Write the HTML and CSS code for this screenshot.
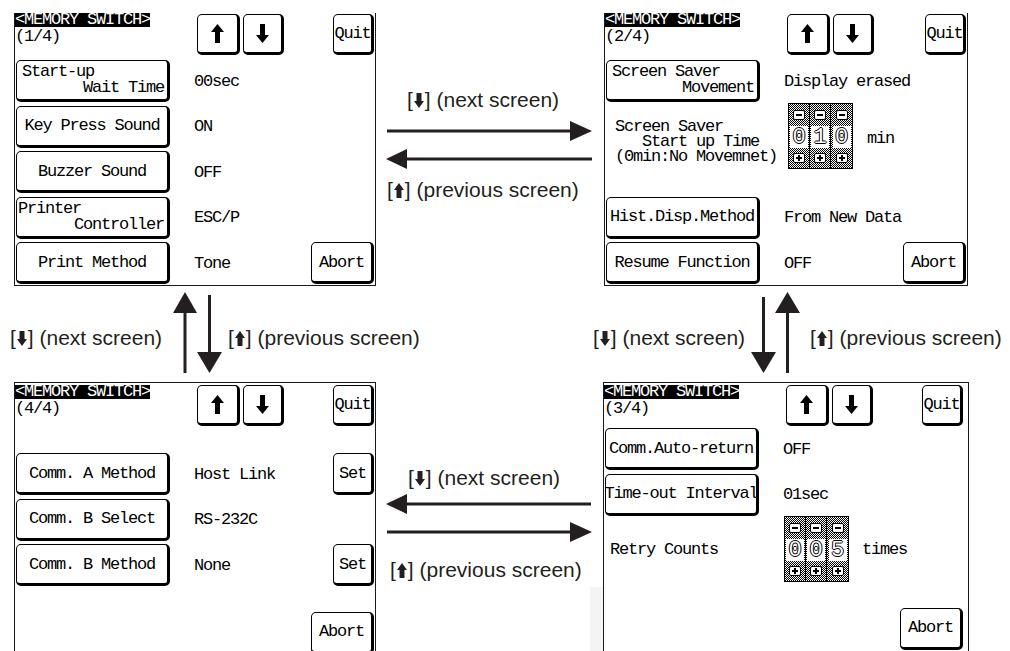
FILE: index.html
```html
<!DOCTYPE html>
<html lang="en">
<head>
    <meta charset="UTF-8">
    <meta name="viewport" content="width=device-width, initial-scale=1.0">
    <title>MEMORY SWITCH screens</title>
    <link rel="stylesheet" href="styles.css">
</head>
<body>
<div class="canvas">

    <!-- connectors between the screens -->
    <svg class="arrows" width="1010" height="651" viewBox="0 0 1010 651">
        <rect x="590" y="587" width="13" height="64" fill="#f4f4f4"/>
        <g stroke="#231f20" stroke-width="3">
            <line x1="387" y1="131" x2="572" y2="131"/>
            <line x1="405" y1="159" x2="592" y2="159"/>
            <line x1="405" y1="504" x2="591" y2="504"/>
            <line x1="387" y1="532" x2="572" y2="532"/>
            <line x1="185" y1="311" x2="185" y2="373"/>
            <line x1="209.5" y1="295" x2="209.5" y2="354"/>
            <line x1="763.5" y1="297" x2="763.5" y2="354"/>
            <line x1="787.5" y1="311" x2="787.5" y2="373"/>
        </g>
        <g fill="#231f20">
            <polygon points="570,121 592,131 570,141"/>
            <polygon points="407,149 386,159 407,169"/>
            <polygon points="407,494 386,504 407,514"/>
            <polygon points="570,522 592,532 570,542"/>
            <polygon points="173,313 185,292 197,313"/>
            <polygon points="197,352 209.5,373 222,352"/>
            <polygon points="751,352 763.5,373 776,352"/>
            <polygon points="775,313 787.5,292 800,313"/>
        </g>
    </svg>

    <div class="lbl l-top-next">[<svg class="ico" width="10" height="15" viewBox="0 0 10 15"><path d="M5 15 L10 8 H7.5 V0 H2.5 V8 H0 Z"/></svg>] (next screen)</div>
    <div class="lbl l-top-prev">[<svg class="ico" width="10" height="15" viewBox="0 0 10 15"><path d="M5 0 L10 7 H7.5 V15 H2.5 V7 H0 Z"/></svg>] (previous screen)</div>
    <div class="lbl l-left-next">[<svg class="ico" width="10" height="15" viewBox="0 0 10 15"><path d="M5 15 L10 8 H7.5 V0 H2.5 V8 H0 Z"/></svg>] (next screen)</div>
    <div class="lbl l-left-prev">[<svg class="ico" width="10" height="15" viewBox="0 0 10 15"><path d="M5 0 L10 7 H7.5 V15 H2.5 V7 H0 Z"/></svg>] (previous screen)</div>
    <div class="lbl l-right-next">[<svg class="ico" width="10" height="15" viewBox="0 0 10 15"><path d="M5 15 L10 8 H7.5 V0 H2.5 V8 H0 Z"/></svg>] (next screen)</div>
    <div class="lbl l-right-prev">[<svg class="ico" width="10" height="15" viewBox="0 0 10 15"><path d="M5 0 L10 7 H7.5 V15 H2.5 V7 H0 Z"/></svg>] (previous screen)</div>
    <div class="lbl l-bot-next">[<svg class="ico" width="10" height="15" viewBox="0 0 10 15"><path d="M5 15 L10 8 H7.5 V0 H2.5 V8 H0 Z"/></svg>] (next screen)</div>
    <div class="lbl l-bot-prev">[<svg class="ico" width="10" height="15" viewBox="0 0 10 15"><path d="M5 0 L10 7 H7.5 V15 H2.5 V7 H0 Z"/></svg>] (previous screen)</div>

    <!-- screen 1/4 -->
    <div class="screen s1">
        <div class="head">
            <div class="heading"><span class="title">&lt;MEMORY SWITCH&gt;</span><span class="page">(1/4)</span></div>
            <div class="nav">
                <div class="key arrow-key"><svg width="13" height="19" viewBox="0 0 13 19"><path d="M6.5 0 L13 8 H9 V19 H4 V8 H0 Z"/></svg></div>
                <div class="key arrow-key"><svg width="13" height="19" viewBox="0 0 13 19"><path d="M6.5 19 L13 11 H9 V0 H4 V11 H0 Z"/></svg></div>
            </div>
            <div class="key quit">Quit</div>
        </div>
        <div class="rows">
            <div class="row">
                <div class="key item two"><span>Start-up</span><span class="r">Wait Time</span></div>
                <span class="val">00sec</span>
            </div>
            <div class="row">
                <div class="key item">Key Press Sound</div>
                <span class="val">ON</span>
            </div>
            <div class="row">
                <div class="key item">Buzzer Sound</div>
                <span class="val">OFF</span>
            </div>
            <div class="row">
                <div class="key item two tight"><span>Printer</span><span class="r">Controller</span></div>
                <span class="val">ESC/P</span>
            </div>
            <div class="row">
                <div class="key item">Print Method</div>
                <span class="val">Tone</span>
                <div class="key abort">Abort</div>
            </div>
        </div>
    </div>

    <!-- screen 2/4 -->
    <div class="screen s2">
        <div class="head">
            <div class="heading"><span class="title">&lt;MEMORY SWITCH&gt;</span><span class="page">(2/4)</span></div>
            <div class="nav">
                <div class="key arrow-key"><svg width="13" height="19" viewBox="0 0 13 19"><path d="M6.5 0 L13 8 H9 V19 H4 V8 H0 Z"/></svg></div>
                <div class="key arrow-key"><svg width="13" height="19" viewBox="0 0 13 19"><path d="M6.5 19 L13 11 H9 V0 H4 V11 H0 Z"/></svg></div>
            </div>
            <div class="key quit">Quit</div>
        </div>
        <div class="rows">
            <div class="row">
                <div class="key item two"><span>Screen Saver</span><span class="r">Movement</span></div>
                <span class="val">Display erased</span>
            </div>
            <div class="row wheel-row saver">
                <div class="wlabel">Screen Saver
   Start up Time
(0min:No Movemnet)</div>
                <div class="wheel">
                    <div class="wcol"><span class="wbtn"></span><span class="wdigit">0</span><span class="wbtn plus"></span></div>
                    <div class="wcol"><span class="wbtn"></span><span class="wdigit">1</span><span class="wbtn plus"></span></div>
                    <div class="wcol"><span class="wbtn"></span><span class="wdigit">0</span><span class="wbtn plus"></span></div>
                </div>
                <span class="unit">min</span>
            </div>
            <div class="row">
                <div class="key item">Hist.Disp.Method</div>
                <span class="val">From New Data</span>
            </div>
            <div class="row">
                <div class="key item">Resume Function</div>
                <span class="val">OFF</span>
                <div class="key abort">Abort</div>
            </div>
        </div>
    </div>

    <!-- screen 4/4 -->
    <div class="screen s4">
        <div class="head">
            <div class="heading"><span class="title">&lt;MEMORY SWITCH&gt;</span><span class="page">(4/4)</span></div>
            <div class="nav">
                <div class="key arrow-key"><svg width="13" height="19" viewBox="0 0 13 19"><path d="M6.5 0 L13 8 H9 V19 H4 V8 H0 Z"/></svg></div>
                <div class="key arrow-key"><svg width="13" height="19" viewBox="0 0 13 19"><path d="M6.5 19 L13 11 H9 V0 H4 V11 H0 Z"/></svg></div>
            </div>
            <div class="key quit">Quit</div>
        </div>
        <div class="rows">
            <div class="row">
                <div class="key item">Comm. A Method</div>
                <span class="val">Host Link</span>
                <div class="key set">Set</div>
            </div>
            <div class="row">
                <div class="key item">Comm. B Select</div>
                <span class="val">RS-232C</span>
            </div>
            <div class="row">
                <div class="key item">Comm. B Method</div>
                <span class="val">None</span>
                <div class="key set">Set</div>
            </div>
            <div class="row end">
                <div class="key abort">Abort</div>
            </div>
        </div>
    </div>

    <!-- screen 3/4 -->
    <div class="screen s3">
        <div class="head">
            <div class="heading"><span class="title">&lt;MEMORY SWITCH&gt;</span><span class="page">(3/4)</span></div>
            <div class="nav">
                <div class="key arrow-key"><svg width="13" height="19" viewBox="0 0 13 19"><path d="M6.5 0 L13 8 H9 V19 H4 V8 H0 Z"/></svg></div>
                <div class="key arrow-key"><svg width="13" height="19" viewBox="0 0 13 19"><path d="M6.5 19 L13 11 H9 V0 H4 V11 H0 Z"/></svg></div>
            </div>
            <div class="key quit">Quit</div>
        </div>
        <div class="rows">
            <div class="row">
                <div class="key item">Comm.Auto-return</div>
                <span class="val">OFF</span>
            </div>
            <div class="row">
                <div class="key item">Time-out Interval</div>
                <span class="val">01sec</span>
            </div>
            <div class="row wheel-row retry">
                <div class="wlabel">Retry Counts</div>
                <div class="wheel">
                    <div class="wcol"><span class="wbtn"></span><span class="wdigit">0</span><span class="wbtn plus"></span></div>
                    <div class="wcol"><span class="wbtn"></span><span class="wdigit">0</span><span class="wbtn plus"></span></div>
                    <div class="wcol"><span class="wbtn"></span><span class="wdigit">5</span><span class="wbtn plus"></span></div>
                </div>
                <span class="unit">times</span>
            </div>
            <div class="row end">
                <div class="key abort">Abort</div>
            </div>
        </div>
    </div>

</div>
</body>
</html>
```

FILE: styles.css
```css
body {
    margin: 0;
    background: #fff;
    color: #231f20;
    font-family: "Liberation Sans", Arial, sans-serif;
}
.canvas {
    position: relative;
    width: 1010px;
    height: 651px;
    overflow: hidden;
}
.arrows {
    position: absolute;
    left: 0;
    top: 0;
}

/* captions between the screens */
.lbl {
    position: absolute;
    font-size: 21px;
    line-height: 24px;
    white-space: nowrap;
}
.lbl .ico {
    fill: #231f20;
    vertical-align: -1px;
    margin: 0 1px;
}
.l-top-next { left: 407px; top: 88px; }
.l-top-prev { left: 387px; top: 178px; }
.l-left-next { left: 10px; top: 326px; }
.l-left-prev { left: 228px; top: 326px; }
.l-right-next { left: 593px; top: 326px; }
.l-right-prev { left: 810px; top: 326px; }
.l-bot-next { left: 408px; top: 466px; }
.l-bot-prev { left: 390px; top: 558px; }

/* touch panel screens */
.screen {
    position: absolute;
    box-sizing: border-box;
    width: 362px;
    height: 283px;
    border: 1px solid #1a1a1a;
    background: #fff;
    color: #000;
    font-family: "Liberation Mono", "DejaVu Sans Mono", monospace;
    font-size: 17px;
    letter-spacing: -1.2px;
    padding: 2px 1px 0 0;
}
.s1, .s2 {
    top: 13px;
    height: 273px;
    border-top: none;
    padding-top: 0;
}
.s1 { left: 14px; }
.s2 { left: 604px; width: 364px; }
.s3 { left: 603px; top: 382px; width: 366px; padding-right: 5px; }
.s4 { left: 14px; top: 382px; }

.head {
    display: flex;
    align-items: flex-start;
    height: 47px;
}
.s3 .head, .s4 .head { height: 43px; }
.heading {
    width: 182px;
    display: flex;
    flex-direction: column;
    align-items: flex-start;
}
.title {
    background: #000;
    color: #fff;
    height: 14px;
    line-height: 14px;
}
.page {
    line-height: 16px;
    margin-top: 2px;
}
.nav {
    display: flex;
    gap: 3px;
    margin-top: 1px;
}
.s3 .nav, .s4 .nav { margin-top: 0; }

.key {
    box-sizing: border-box;
    background: #fff;
    border: 1px solid #000;
    border-right-width: 3px;
    border-bottom-width: 3px;
    border-radius: 5px;
    display: flex;
    align-items: center;
    justify-content: center;
    white-space: nowrap;
}
.arrow-key { width: 43px; height: 41px; }
.arrow-key + .arrow-key { width: 41px; }
.quit {
    width: 41px;
    height: 41px;
    margin-left: auto;
    margin-top: 1px;
}
.s3 .quit, .s4 .quit { margin-top: 0; }

.rows {
    display: flex;
    flex-direction: column;
    gap: 3.5px;
    padding-left: 1px;
}
.s4 .rows { margin-top: 25px; }
.row {
    display: flex;
    align-items: center;
    height: 42px;
}
.row.end { margin-top: 22px; }

.item {
    width: 154px;
    height: 42px;
    flex: none;
}
.item.two {
    flex-direction: column;
    align-items: stretch;
    padding: 0 3px 0 5px;
    line-height: 16px;
}
.item.two.tight { padding-left: 1px; }
.item.two .r { text-align: right; }
.val { margin-left: 24px; }
.abort {
    width: 63px;
    height: 42px;
    margin-left: auto;
}
.set {
    width: 41px;
    height: 42px;
    margin-left: auto;
}

/* thumbwheel setting */
.wheel-row { align-items: flex-start; }
.saver { height: 87.5px; }
.retry {
    height: 66px;
    margin-top: -3px;
    align-items: center;
}
.wlabel {
    white-space: pre;
    line-height: 15px;
    flex: none;
}
.saver .wlabel {
    width: 173px;
    margin: 13px 0 0 9px;
}
.retry .wlabel {
    width: 174px;
    margin-left: 5px;
}
.wheel {
    display: flex;
    box-sizing: border-box;
    height: 66px;
    border: 1px solid #000;
    background: repeating-conic-gradient(#000 0 25%, #fff 0 50%) 0 0 / 2px 2px;
}
.saver .wheel { margin-top: -2.5px; }
.wcol {
    width: 21px;
    box-sizing: border-box;
    display: flex;
    flex-direction: column;
    align-items: center;
    justify-content: space-between;
    padding: 6px 0 5px;
    border-right: 1px solid #000;
}
.wcol:last-child { border-right: none; }
.wbtn {
    position: relative;
    box-sizing: border-box;
    width: 12px;
    height: 10px;
    background: #fff;
    border: 1px solid #000;
    border-radius: 2px;
}
.wbtn::before {
    content: "";
    position: absolute;
    left: 2px;
    right: 2px;
    top: 3px;
    height: 2px;
    background: #000;
}
.wbtn.plus::after {
    content: "";
    position: absolute;
    left: 4px;
    width: 2px;
    top: 1px;
    bottom: 1px;
    background: #000;
}
.wdigit {
    width: 18px;
    height: 22px;
    background: #fff;
    font-size: 22px;
    line-height: 23px;
    text-align: center;
    letter-spacing: 0;
    color: #fff;
    text-shadow: 1px 0 #000, -1px 0 #000, 0 1px #000, 0 -1px #000;
}
.unit { align-self: center; }
.saver .unit { margin: 0 0 22px 14px; }
.retry .unit { margin-left: 13px; }
```
